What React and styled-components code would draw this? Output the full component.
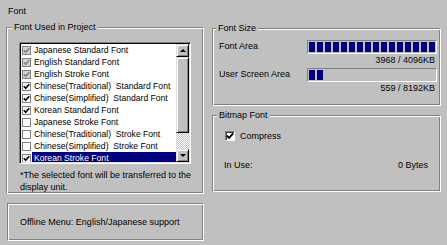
import React from 'react';
import styled, { createGlobalStyle, css } from 'styled-components';

const Global = createGlobalStyle`
  html, body { margin: 0; padding: 0; background: #c0c0c0; }
  body { font-family: "Liberation Sans", Arial, sans-serif; font-size: 9px; color: #000; }
  * { box-sizing: border-box; }
`;

const etched = css`
  border: 1px solid;
  border-color: #808080 #fff #fff #808080;
  box-shadow: inset 1px 1px #fff, inset -1px -1px #808080;
`;

const raised = css`
  border: 1px solid;
  border-color: #dfdfdf #000 #000 #dfdfdf;
  box-shadow: inset 1px 1px #fff, inset -1px -1px #808080;
  background: #c0c0c0;
`;

const Page = styled.div`
  width: 447px;
  height: 245px;
  padding-top: 5px;
  display: flex;
  flex-direction: column;
  overflow: hidden;
`;

const Title = styled.div`
  margin-left: 8px;
  line-height: 12px;
`;

const Columns = styled.div`
  display: flex;
  margin-top: 10px;
  padding-left: 6px;
  gap: 8px;
`;

const LeftCol = styled.div`
  width: 198px;
  display: flex;
  flex-direction: column;
`;

const RightCol = styled.div`
  width: 229px;
  display: flex;
  flex-direction: column;
  padding-top: 1px;
  gap: 9px;
`;

const Group = styled.div`
  ${etched};
  display: flex;
  flex-direction: column;
  height: ${p => p.$h}px;
`;

const Legend = styled.div`
  align-self: flex-start;
  margin: -7px 0 0 ${p => p.$x}px;
  padding: 0 2px;
  background: #c0c0c0;
  line-height: 12px;
`;

const ListBox = styled.div`
  margin: 9px 0 0 12px;
  width: 172px;
  height: 122px;
  border: 1px solid;
  border-color: #808080 #fff #fff #808080;
  box-shadow: inset 1px 1px #000, inset -1px -1px #dfdfdf;
  padding: 1px;
  display: flex;
  background: #fff;
`;

const Items = styled.div`
  flex: 1;
  overflow: hidden;
  display: flex;
  flex-direction: column;
  font-size: 8.6px;
`;

const Row = styled.div`
  height: 12px;
  flex-shrink: 0;
  display: flex;
  align-items: center;
  padding-left: 1px;
`;

const ItemLabel = styled.div`
  flex: 1;
  height: 12px;
  line-height: 12px;
  margin-left: 1px;
  padding-left: 2px;
  white-space: pre;
  background: ${p => (p.$selected ? '#000080' : 'transparent')};
  color: ${p => (p.$selected ? '#fff' : '#000')};
`;

const Box = styled.span`
  width: ${p => p.$size}px;
  height: ${p => p.$size}px;
  flex-shrink: 0;
  border: 1px solid;
  border-color: ${p => (p.$sunken ? '#808080 #fff #fff #808080' : '#808080')};
  box-shadow: ${p => (p.$sunken ? 'inset 1px 1px #404040' : 'none')};
  background: ${p => (p.$disabled ? '#d4d4d4' : '#fff')};
  display: flex;
  align-items: center;
  justify-content: center;
`;

const Scrollbar = styled.div`
  width: 13px;
  display: flex;
  flex-direction: column;
`;

const ScrollBtn = styled.div`
  ${raised};
  height: 13px;
  flex-shrink: 0;
  display: flex;
  align-items: center;
  justify-content: center;
`;

const Arrow = styled.span`
  width: 0;
  height: 0;
  border-left: 3px solid transparent;
  border-right: 3px solid transparent;
  ${p => (p.$dir === 'up' ? 'border-bottom: 3px solid #000;' : 'border-top: 3px solid #000;')}
`;

const Thumb = styled.div`
  ${raised};
  height: 76px;
  flex-shrink: 0;
`;

const Track = styled.div`
  flex: 1;
  background: repeating-conic-gradient(#fff 0 25%, #c0c0c0 0 50%) 0 0 / 2px 2px;
`;

const Note = styled.div`
  margin: 5px 0 0 13px;
  width: 176px;
  line-height: 12px;
`;

const OfflineBox = styled.div`
  ${etched};
  margin: 9px 0 0 1px;
  width: 197px;
  height: 38px;
  display: flex;
  align-items: center;
  padding-left: 12px;
`;

const MeterRow = styled.div`
  display: flex;
  padding-left: 6px;
  margin-top: ${p => p.$mt}px;
`;

const MeterLabel = styled.div`
  width: 88px;
  line-height: 13px;
`;

const MeterCol = styled.div`
  width: 130px;
  display: flex;
  flex-direction: column;
`;

const Bar = styled.div`
  height: 14px;
  border: 1px solid;
  border-color: #808080 #fff #fff #808080;
  padding: 1px;
  display: flex;
  gap: 2px;
`;

const Block = styled.span`
  width: 6px;
  background: #000080;
`;

const Value = styled.div`
  text-align: right;
  padding-right: 2px;
  line-height: 12px;
`;

const CheckRow = styled.div`
  display: flex;
  align-items: center;
  gap: 5px;
  margin-top: 9px;
  padding-left: 12px;
  line-height: 12px;
`;

const InfoRow = styled.div`
  display: flex;
  justify-content: space-between;
  margin-top: 17px;
  padding: 0 12px 0 11px;
  line-height: 12px;
`;

const Check = ({ color = '#000', size = 7 }) => (
  <svg width={size} height={size} viewBox="0 0 7 7">
    <path d="M0.8 3.2 L2.7 5.2 L6.3 1.2" fill="none" stroke={color} strokeWidth="1.6" />
  </svg>
);

const CheckBox = ({ checked, disabled, size = 9, sunken }) => (
  <Box $size={size} $disabled={disabled} $sunken={sunken}>
    {checked && <Check color={disabled ? '#808080' : '#000'} size={size - 2} />}
  </Box>
);

const fonts = [
  { name: 'Japanese Standard Font', checked: true, disabled: true },
  { name: 'English Standard Font', checked: true, disabled: true },
  { name: 'English Stroke Font', checked: true, disabled: true },
  { name: 'Chinese(Traditional)  Standard Font', checked: true },
  { name: 'Chinese(Simplified)  Standard Font', checked: true },
  { name: 'Korean Standard Font', checked: true },
  { name: 'Japanese Stroke Font', checked: false },
  { name: 'Chinese(Traditional)  Stroke Font', checked: false },
  { name: 'Chinese(Simplified)  Stroke Font', checked: false },
  { name: 'Korean Stroke Font', checked: true, selected: true },
];

const Meter = ({ label, used, total, mt }) => {
  const blocks = Math.ceil((used / total) * 16);
  return (
    <MeterRow $mt={mt}>
      <MeterLabel>{label}</MeterLabel>
      <MeterCol>
        <Bar>
          {Array.from({ length: blocks }, (_, i) => <Block key={i} />)}
        </Bar>
        <Value>{used} / {total}KB</Value>
      </MeterCol>
    </MeterRow>
  );
};

export default function App() {
  return (
    <>
      <Global />
      <Page>
        <Title>Font</Title>
        <Columns>
          <LeftCol>
            <Group $h={167}>
              <Legend $x={5}>Font Used in Project</Legend>
              <ListBox>
                <Items>
                  {fonts.map(f => (
                    <Row key={f.name}>
                      <CheckBox checked={f.checked} disabled={f.disabled} />
                      <ItemLabel $selected={f.selected}>{f.name}</ItemLabel>
                    </Row>
                  ))}
                </Items>
                <Scrollbar>
                  <ScrollBtn><Arrow $dir="up" /></ScrollBtn>
                  <Thumb />
                  <Track />
                  <ScrollBtn><Arrow $dir="down" /></ScrollBtn>
                </Scrollbar>
              </ListBox>
              <Note>*The selected font will be transferred to the display unit.</Note>
            </Group>
            <OfflineBox>Offline Menu: English/Japanese support</OfflineBox>
          </LeftCol>
          <RightCol>
            <Group $h={78}>
              <Legend $x={3}>Font Size</Legend>
              <Meter label="Font Area" used={3968} total={4096} mt={6} />
              <Meter label="User Screen Area" used={559} total={8192} mt={2} />
            </Group>
            <Group $h={77}>
              <Legend $x={4}>Bitmap Font</Legend>
              <CheckRow>
                <CheckBox checked size={10} sunken />
                <span>Compress</span>
              </CheckRow>
              <InfoRow>
                <span>In Use:</span>
                <span>0 Bytes</span>
              </InfoRow>
            </Group>
          </RightCol>
        </Columns>
      </Page>
    </>
  );
}
